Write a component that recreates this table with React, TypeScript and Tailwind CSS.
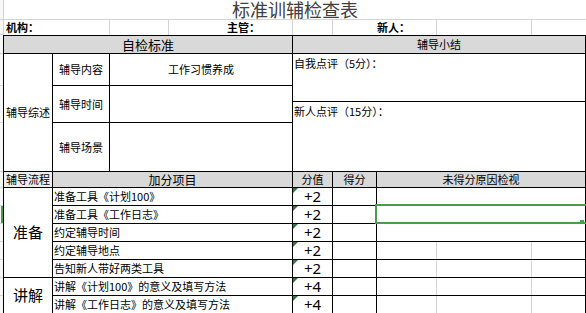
import React from "react";

const upperRows = [
  { label: "辅导内容", value: "工作习惯养成", h: "h-[32px]" },
  { label: "辅导时间", value: "", h: "h-[37px]" },
  { label: "辅导场景", value: "", h: "h-[49px]" },
];

const items = [
  { text: "准备工具《计划100》", score: "+2", merged: true },
  { text: "准备工具《工作日志》", score: "+2", merged: true, selected: true },
  { text: "约定辅导时间", score: "+2", merged: true },
  { text: "约定辅导地点", score: "+2", merged: false },
  { text: "告知新人带好两类工具", score: "+2", merged: false },
  { text: "讲解《计划100》的意义及填写方法", score: "+4", merged: false },
  { text: "讲解《工作日志》的意义及填写方法", score: "+4", merged: false },
];

const stripHeights = [
  "h-[20px]",
  "h-[15px]",
  "h-[19px]",
  "h-[32px]",
  "h-[37px]",
  "h-[49px]",
  "h-[16px]",
  "h-[18px]",
  "h-[18px]",
  "h-[18px]",
  "h-[18px]",
  "h-[18px]",
  "h-[18px]",
  "h-[18px]",
];

function Tri() {
  return (
    <svg className="absolute left-0 top-0" width="5" height="5" viewBox="0 0 5 5">
      <path d="M0 0H5L0 5Z" fill="#2d7a36" />
    </svg>
  );
}

export default function App() {
  return (
    <div className="flex h-[313px] w-[586px] overflow-hidden bg-white font-['Noto_Sans_CJK_SC','Noto_Sans',sans-serif] text-black">
      {/* row header strip */}
      <div className="flex w-[3px] shrink-0 flex-col">
        {stripHeights.map((h, i) => (
          <div key={i} className={`${h} shrink-0 border-b border-[#d4d4d4] bg-[#f7f7f7]`}>
            {i === 8 && <div className="ml-[1px] h-full w-[2px] bg-[#4a9e4a]" />}
          </div>
        ))}
      </div>

      {/* sheet */}
      <div className="flex w-[583px] shrink-0 flex-col">
        {/* title */}
        <div className="flex h-[20px] shrink-0 items-start justify-center overflow-hidden border-b border-l border-[#d4d4d4]">
          <span className="text-[18px] leading-[18px] text-[#404040]">标准训辅检查表</span>
        </div>

        {/* info row */}
        <div className="flex h-[15px] shrink-0 text-[11px] font-bold leading-[15px]">
          <div className="w-[107px] border-x border-[#d4d4d4] pl-[2px]">机构：</div>
          <div className="w-[59px] border-r border-[#d4d4d4]" />
          <div className="w-[124px] border-r border-[#d4d4d4] pl-[58px]">主管：</div>
          <div className="w-[40px] border-r border-[#d4d4d4]" />
          <div className="w-[104px] border-r border-[#d4d4d4] pl-[44px]">新人：</div>
          <div className="w-[95px] border-r border-[#d4d4d4]" />
          <div className="flex-1" />
        </div>

        {/* header 1 */}
        <div className="flex h-[19px] shrink-0 border-y border-black bg-[#d9d9d9] leading-[17px]">
          <div className="w-[290px] border-x border-black text-center text-[13px]">自检标准</div>
          <div className="flex-1 border-r border-black text-center text-[11px]">辅导小结</div>
        </div>

        {/* upper body */}
        <div className="flex h-[118px] shrink-0 text-[11px]">
          <div className="flex w-[290px]">
            <div className="flex w-[50px] items-center justify-center border-x border-b border-black">
              辅导综述
            </div>
            <div className="flex w-[240px] flex-col">
              {upperRows.map((r) => (
                <div key={r.label} className={`flex ${r.h} shrink-0 border-b border-black`}>
                  <div className="flex w-[57px] items-center justify-center border-r border-black">
                    {r.label}
                  </div>
                  <div className="flex w-[183px] items-center justify-center border-r border-black">
                    {r.value}
                  </div>
                </div>
              ))}
            </div>
          </div>
          <div className="flex w-[293px] flex-col">
            <div className="h-[48px] shrink-0 border-r border-b border-black pl-[1px] pt-[2px] leading-[14px]">
              自我点评（5分）：
            </div>
            <div className="h-[70px] shrink-0 border-r border-b border-black pl-[1px] pt-[2px] leading-[14px]">
              新人点评（15分）：
            </div>
          </div>
        </div>

        {/* header 2 */}
        <div className="flex h-[16px] shrink-0 border-b border-black bg-[#d9d9d9] text-[11px] leading-[15px]">
          <div className="w-[50px] border-x border-black bg-[#ededed] text-center">辅导流程</div>
          <div className="w-[240px] border-r border-black text-center text-[12px]">加分项目</div>
          <div className="w-[40px] border-r border-black text-center">分值</div>
          <div className="w-[44px] border-r border-black text-center">得分</div>
          <div className="flex-1 border-r border-black text-center">未得分原因检视</div>
        </div>

        {/* lower body */}
        <div className="flex shrink-0">
          <div className="flex w-[50px] flex-col text-[15px]">
            <div className="flex h-[90px] items-center justify-center border-x border-b border-black">准备</div>
            <div className="flex h-[36px] items-center justify-center border-x border-b border-black">讲解</div>
          </div>
          <div className="flex w-[533px] flex-col">
            {items.map((it) => (
              <div key={it.text} className="flex h-[18px] shrink-0 border-b border-black">
                <div className="w-[240px] border-r border-black pl-[1px] text-[11px] leading-[17px]">
                  {it.text}
                </div>
                <div className="relative flex w-[40px] items-center justify-center border-r border-black font-['Noto_Sans',sans-serif] text-[15px] leading-[17px]">
                  <Tri />
                  {it.score}
                </div>
                <div className="w-[44px] border-r border-black" />
                <div className="relative flex flex-1 border-r border-black">
                  {!it.merged && (
                    <>
                      <div className="w-[60px] border-r border-[#d4d4d4]" />
                      <div className="w-[95px] border-r border-[#d4d4d4]" />
                      <div className="flex-1" />
                    </>
                  )}
                  {it.selected && (
                    <div className="absolute -left-[2px] -top-[2px] -bottom-[1px] -right-[10px] border-2 border-[#4a9e4a]">
                      <div className="absolute left-[203px] top-[14px] h-[4px] w-[4px] bg-[#4a9e4a]" />
                    </div>
                  )}
                </div>
              </div>
            ))}
          </div>
        </div>
      </div>
    </div>
  );
}
